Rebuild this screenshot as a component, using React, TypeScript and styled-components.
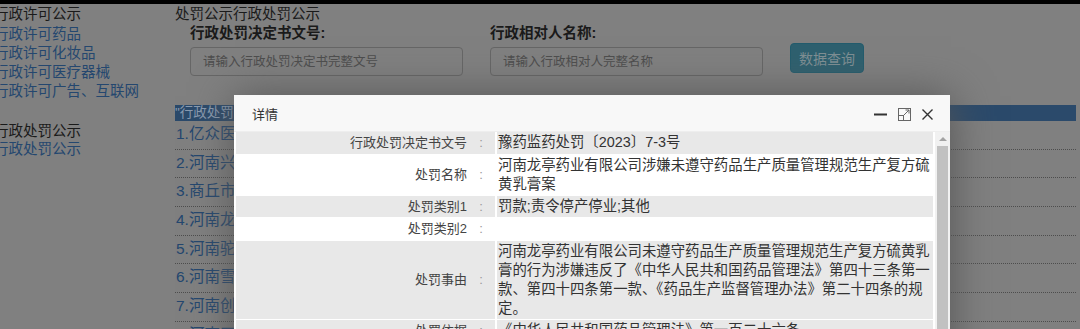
import React from 'react';
import styled, {createGlobalStyle} from 'styled-components';

// Page behind the open dialog, drawn with its dimmed colours.
const DIM = {
    bg: '#808080',
    text: '#1a1a1a',
    link: '#24476f',
    line: '#4d4d4d'
};

const GlobalStyle = createGlobalStyle`
  html, body {
    margin: 0;
    padding: 0;
    background: ${DIM.bg};
    overflow: hidden;
  }
  body {
    font-family: "Liberation Sans", "Noto Sans CJK SC", sans-serif;
    color: ${DIM.text};
  }
`;

const Screen = styled.div`
  position: relative;
  width: 1080px;
  height: 329px;
  overflow: hidden;
  background: ${DIM.bg};
`;

const TopStrip = styled.div`
  height: 4px;
  background: #000;
`;

const Page = styled.div`
  display: flex;
  align-items: flex-start;
`;

const Sidebar = styled.div`
  flex: none;
  width: 181px;
  margin-left: -6px;
  padding-top: 1.4px;
  font-size: 14.5px;
`;

const SideGroup = styled.div<{ $gap?: number }>`
  margin-top: ${p => p.$gap || 0}px;
`;

const SideHead = styled.div`
  line-height: 19.25px;
  color: ${DIM.text};
  white-space: nowrap;
`;

const SideLink = styled.a<{ $tight?: boolean }>`
  display: block;
  line-height: ${p => (p.$tight ? 17 : 19.25)}px;
  color: ${DIM.link};
  text-decoration: none;
  white-space: nowrap;
`;

const Main = styled.div`
  flex: 1;
  min-width: 0;
  padding-right: 4px;
`;

const MainTitle = styled.div`
  font-size: 14.5px;
  line-height: 19px;
  padding-top: 1px;
  color: ${DIM.text};
`;

const SearchForm = styled.div`
  display: flex;
  align-items: flex-end;
  gap: 27px;
  padding-left: 15px;
`;

const Field = styled.div`
  width: 273px;
`;

const FieldLabel = styled.div`
  font-size: 14.5px;
  font-weight: bold;
  line-height: 18px;
  color: ${DIM.text};
`;

const TextInput = styled.input`
  display: block;
  box-sizing: border-box;
  width: 100%;
  height: 29px;
  margin-top: 5px;
  padding: 0 12px;
  border: 1px solid #666;
  border-radius: 4px;
  font-family: inherit;
  font-size: 12.5px;
  color: #2b2b2b;
  background: ${DIM.bg};
  &::placeholder {
    color: #4d4d4d;
  }
`;

const QueryButton = styled.button`
  width: 74px;
  height: 30px;
  margin-bottom: 3px;
  border: 1px solid #235c6d;
  border-radius: 4px;
  background: #2e606f;
  color: #7f8f94;
  font-family: inherit;
  font-size: 14px;
`;

const ResultHead = styled.div`
  margin-top: 29px;
  height: 16px;
  line-height: 16px;
  background: #2b4a6b;
  color: #8a9bb0;
  font-size: 13.5px;
  white-space: nowrap;
  overflow: hidden;
`;

const ResultRow = styled.a`
  display: block;
  line-height: 25px;
  padding: 0 0 2.7px 1px;
  border-bottom: 1px dotted ${DIM.line};
  font-size: 15.5px;
  color: ${DIM.link};
  text-decoration: none;
  white-space: nowrap;
  overflow: hidden;
`;

const Dialog = styled.div`
  position: absolute;
  left: 234px;
  top: 95px;
  width: 716px;
  height: 300px;
  display: flex;
  flex-direction: column;
  background: #fff;
  box-shadow: 1px 1px 40px #555;
  overflow: hidden;
`;

const DialogTitle = styled.div`
  flex: none;
  display: flex;
  align-items: center;
  justify-content: space-between;
  height: 36px;
  padding: 0 17px 0 18px;
  background: #f8f8f8;
  border-bottom: 1px solid #eee;
  font-size: 13px;
  color: #333;
`;

const TitleTools = styled.div`
  display: flex;
  align-items: center;
  gap: 11px;
  padding-top: 2px;
`;

const DialogBody = styled.div`
  flex: 1;
  display: flex;
  min-height: 0;
`;

const TableArea = styled.div`
  flex: 1;
  overflow: hidden;
`;

const DetailTable = styled.table`
  width: 100%;
  table-layout: fixed;
  border-collapse: separate;
  border-spacing: 2px 1px;
  margin-top: -1px;
`;

const DetailRow = styled.tr<{ $shade: boolean }>`
  background: ${p => (p.$shade ? '#e8e8e8' : '#fff')};
`;

const LabelCell = styled.td`
  width: 259px;
  padding: 1px 0;
  text-align: right;
  vertical-align: middle;
  font-size: 13px;
  line-height: 19.5px;
  color: #444;
  white-space: nowrap;
`;

const Colon = styled.span`
  display: inline-block;
  width: 28px;
  text-align: center;
  color: #999;
`;

const ValueCell = styled.td`
  padding: 1px 0 1px 1px;
  vertical-align: middle;
  font-size: 14.4px;
  line-height: 19px;
  color: #333;
`;

const Scrollbar = styled.div`
  flex: none;
  width: 15px;
  display: flex;
  flex-direction: column;
  align-items: center;
  background: #f1f1f1;
`;

const ScrollArrow = styled.div`
  height: 14px;
  display: flex;
  align-items: center;
  justify-content: center;
  &::before {
    content: '';
    border-left: 4px solid transparent;
    border-right: 4px solid transparent;
    border-bottom: 4px solid #a3a3a3;
  }
`;

const ScrollThumb = styled.div`
  flex: 1;
  width: 11px;
  background: #c1c1c1;
`;

const sideLinks = ['行政许可药品', '行政许可化妆品', '行政许可医疗器械', '行政许可广告、互联网'];

const results = [
    '1.亿众医药连锁有限公司',
    '2.河南兴华药业有限公司',
    '3.商丘市金康药业有限公司',
    '4.河南龙亭药业有限公司',
    '5.河南驼人医疗器械集团有限公司',
    '6.河南雪樱药业有限公司',
    '7.河南创新药业有限公司',
    '8.河南天方药业有限公司'
];

// value lines, as the dialog breaks them
const details: { label: string; lines: string[] }[] = [
    {label: '行政处罚决定书文号', lines: ['豫药监药处罚〔2023〕7-3号']},
    {label: '处罚名称', lines: ['河南龙亭药业有限公司涉嫌未遵守药品生产质量管理规范生产复方硫', '黄乳膏案']},
    {label: '处罚类别1', lines: ['罚款;责令停产停业;其他']},
    {label: '处罚类别2', lines: []},
    {
        label: '处罚事由',
        lines: [
            '河南龙亭药业有限公司未遵守药品生产质量管理规范生产复方硫黄乳',
            '膏的行为涉嫌违反了《中华人民共和国药品管理法》第四十三条第一',
            '款、第四十四条第一款、《药品生产监督管理办法》第二十四条的规',
            '定。'
        ]
    },
    {label: '处罚依据', lines: ['《中华人民共和国药品管理法》第一百二十六条']},
    {label: '处罚内容', lines: ['罚款']}
];

const MinIcon = () => (
    <svg width="13" height="13" viewBox="0 0 13 13">
        <path d="M0 6.5h13" stroke="#333" strokeWidth="2"/>
    </svg>
);

const MaxIcon = () => (
    <svg width="13" height="13" viewBox="0 0 13 13" fill="none" stroke="#666" strokeWidth="1">
        <rect x="0.5" y="0.5" width="12" height="12"/>
        <rect x="0.5" y="7.5" width="5" height="5"/>
        <path d="M6 7l5-5M7.5 2h3.5v3.5"/>
    </svg>
);

const CloseIcon = () => (
    <svg width="11" height="11" viewBox="0 0 11 11">
        <path d="M0.5 0.5l10 10M10.5 0.5l-10 10" stroke="#333" strokeWidth="1.4"/>
    </svg>
);

export default function App() {
    return (
        <Screen lang="zh-CN">
            <GlobalStyle/>
            <TopStrip/>
            <Page>
                <Sidebar>
                    <SideGroup>
                        <SideHead>行政许可公示</SideHead>
                        {sideLinks.map(text => <SideLink key={text} href="#">{text}</SideLink>)}
                    </SideGroup>
                    <SideGroup $gap={20}>
                        <SideHead>行政处罚公示</SideHead>
                        <SideLink $tight href="#">行政处罚公示</SideLink>
                    </SideGroup>
                </Sidebar>
                <Main>
                    <MainTitle>处罚公示行政处罚公示</MainTitle>
                    <SearchForm>
                        <Field>
                            <FieldLabel>行政处罚决定书文号:</FieldLabel>
                            <TextInput placeholder="请输入行政处罚决定书完整文号"/>
                        </Field>
                        <Field>
                            <FieldLabel>行政相对人名称:</FieldLabel>
                            <TextInput placeholder="请输入行政相对人完整名称"/>
                        </Field>
                        <QueryButton>数据查询</QueryButton>
                    </SearchForm>
                    <ResultHead>"行政处罚公示"查询结果</ResultHead>
                    {results.map(name => <ResultRow key={name} href="#">{name}</ResultRow>)}
                </Main>
            </Page>
            <Dialog>
                <DialogTitle>
                    <span>详情</span>
                    <TitleTools>
                        <MinIcon/>
                        <MaxIcon/>
                        <CloseIcon/>
                    </TitleTools>
                </DialogTitle>
                <DialogBody>
                    <TableArea>
                        <DetailTable>
                            <tbody>
                            {details.map((d, i) => (
                                <DetailRow key={d.label} $shade={i !== 1 && i !== 3}>
                                    <LabelCell>{d.label}<Colon>:</Colon></LabelCell>
                                    <ValueCell>
                                        {d.lines.map((line, j) => (
                                            <React.Fragment key={j}>{j > 0 && <br/>}{line}</React.Fragment>
                                        ))}
                                    </ValueCell>
                                </DetailRow>
                            ))}
                            </tbody>
                        </DetailTable>
                    </TableArea>
                    <Scrollbar>
                        <ScrollArrow/>
                        <ScrollThumb/>
                    </Scrollbar>
                </DialogBody>
            </Dialog>
        </Screen>
    );
}
